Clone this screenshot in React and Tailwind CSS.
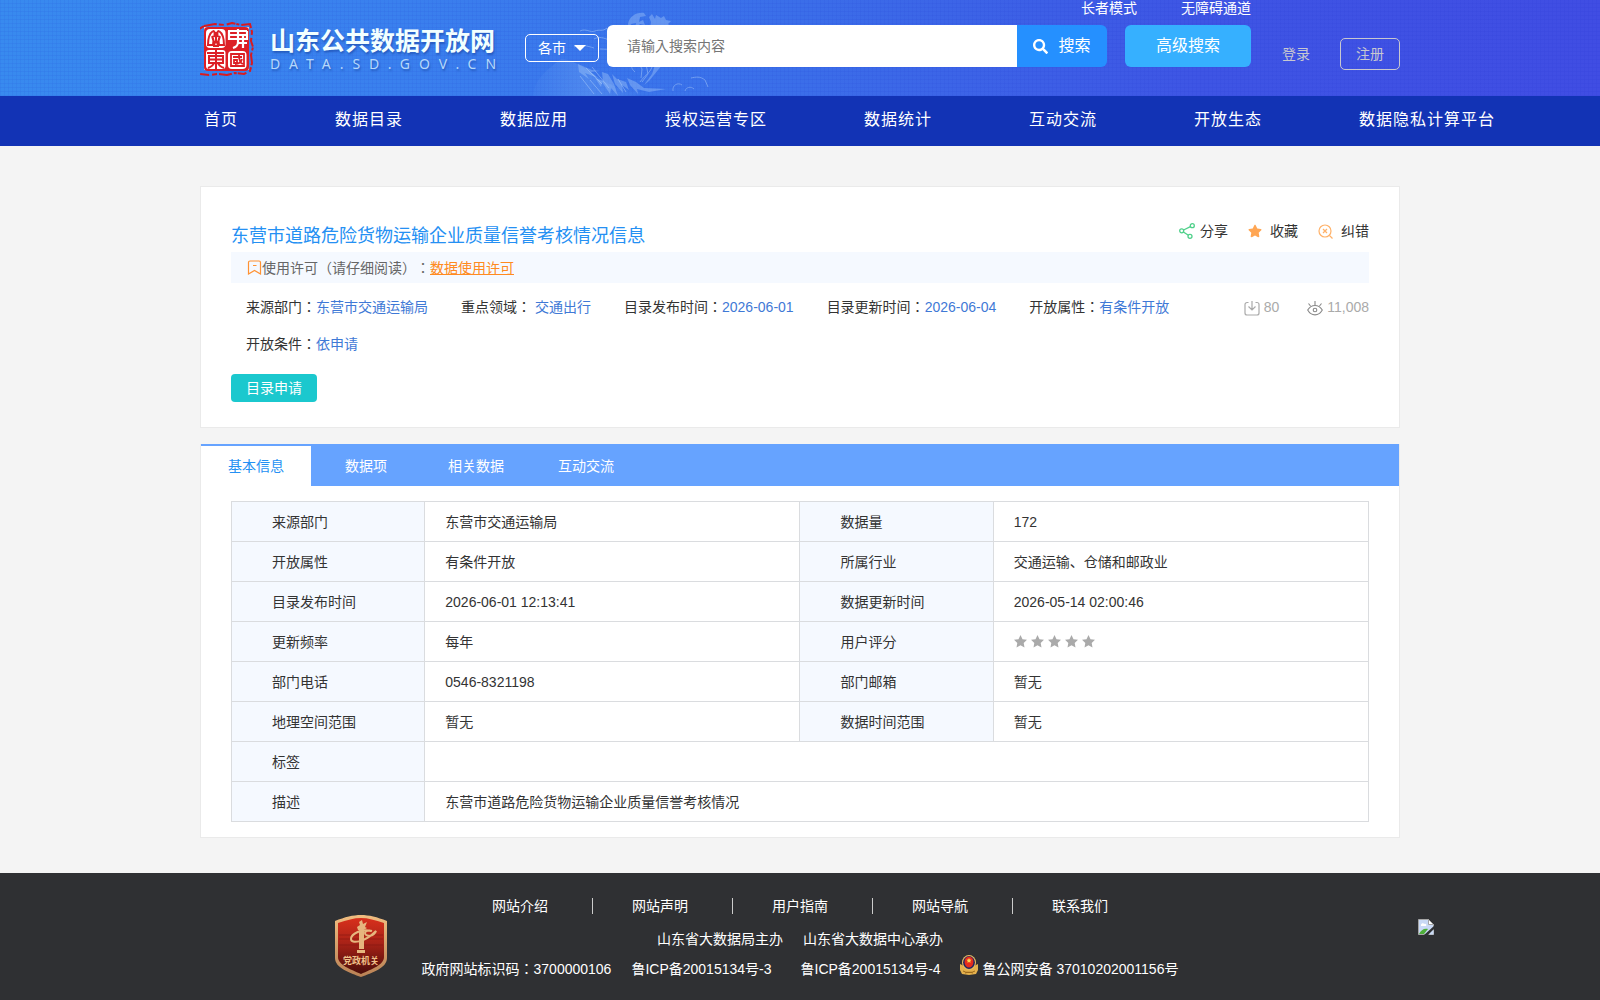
import { FaSearch, FaStar } from 'react-icons/fa';

const NAV_ITEMS = ['首页', '数据目录', '数据应用', '授权运营专区', '数据统计', '互动交流', '开放生态', '数据隐私计算平台'];

const TABS = ['基本信息', '数据项', '相关数据', '互动交流'];

const META = [
  { label: '来源部门：', value: '东营市交通运输局' },
  { label: '重点领域：', value: '交通出行', spaced: true },
  { label: '目录发布时间：', value: '2026-06-01' },
  { label: '目录更新时间：', value: '2026-06-04' },
  { label: '开放属性：', value: '有条件开放' },
  { label: '开放条件：', value: '依申请' },
];

const ROWS = [
  ['来源部门', '东营市交通运输局', '数据量', '172'],
  ['开放属性', '有条件开放', '所属行业', '交通运输、仓储和邮政业'],
  ['目录发布时间', '2026-06-01 12:13:41', '数据更新时间', '2026-05-14 02:00:46'],
  ['更新频率', '每年', '用户评分', <Rating key="rating" />],
  ['部门电话', '0546-8321198', '部门邮箱', '暂无'],
  ['地理空间范围', '暂无', '数据时间范围', '暂无'],
  ['标签', ''],
  ['描述', '东营市道路危险货物运输企业质量信誉考核情况'],
];

const FOOTER_LINKS = ['网站介绍', '网站声明', '用户指南', '网站导航', '联系我们'];

function Rating() {
  return (
    <span className="flex gap-1 text-[#aaaaaa]" role="img" aria-label="评分">
      {[1, 2, 3, 4, 5].map((n) => (
        <svg key={n} width="13" height="13" viewBox="0 0 13 13" fill="currentColor" aria-hidden="true">
          <path d="M6.500 0l2 4.200 4.500.6-3.300 3.100.8 4.600-4-2.200-4 2.200.8-4.600L0 4.800l4.500-.6z" />
        </svg>
      ))}
    </span>
  );
}

function Seal() {
  return (
    <svg width="54" height="54" viewBox="0 0 54 54" fill="none" aria-hidden="true">
      <path
        d="M4 4 15 2l10 1 7-2 9 2 9-1 2 8-1 9 2 6-2 8 1 8-2 8-6 3-9-1-8 2-9-1-9 1-9-1-6-3 2-9-1-7 2-8-2-9 1-7z"
        stroke="#d81a20"
        strokeWidth="2"
        strokeDasharray="13 2 5 3 9 1 3 2"
      />
      <path d="M4 5h45v43H4z" fill="#f6d5d9" />
      <rect x="4" y="5" width="45" height="44" rx="4" fill="#dc2026" />
      <rect x="6" y="7" width="19.500" height="19" rx="4" fill="#fff" />
      <rect x="6" y="28" width="19.500" height="19" rx="3" fill="#fff" />
      <rect x="28" y="29" width="18.500" height="18" rx="4" fill="#fff" />
      {/* left column carved in red */}
      <g stroke="#dc2026" strokeWidth="2">
        <path d="M13 9c-3 2-5 8-5 14h5c1-4 0-7-1-9M19 9c3 2 5 8 5 14h-5c-1-4 0-7 1-9M13 9c2 0 2 3 1 6M19 9c-2 0-2 3-1 6M16 10v7c0 3-2 4-2 7h4c0-3-2-4-2-7" />
        <path d="M7 31h17M16 28v19M9 34h14v7H9zM9 37.500h14M14 41c-1 3-3 4-6 5M18 41c1 3 3 4 6 5" />
      </g>
      {/* right column, white on red above and red on white below */}
      <g stroke="#fff" strokeWidth="2.200">
        <path d="M28 9h19M29 9v8h9M47 9v8h-9M38 7v13c0 4-2 5-5 6M43 13v13M29 13h18M38 21h9" />
      </g>
      <g stroke="#dc2026" strokeWidth="1.800">
        <path d="M31 32h13v12H31zM33 35h9M34 38h3v3h-3zM39 33c0 5 1 8 4 9M42 37c-1 4-3 5-7 5" />
      </g>
    </svg>
  );
}

function Mountain() {
  return (
    <svg
      className="absolute left-1/2 bottom-0 -ml-[270px] pointer-events-none"
      width="180"
      height="86"
      viewBox="0 0 180 86"
      fill="none"
      aria-hidden="true"
    >
      <defs>
        <linearGradient id="slope" x1="0" y1="0" x2="1" y2="0">
          <stop offset="0" stopColor="#7fb2f5" stopOpacity="0.050" />
          <stop offset=".5" stopColor="#7fb2f5" stopOpacity="0.300" />
          <stop offset="1" stopColor="#7fb2f5" stopOpacity="0" />
        </linearGradient>
      </defs>
      <path d="M3 86c2-18 14-26 28-37 8 0 14 4 22 8l20 14 20 9 22 2-8 4z" fill="url(#slope)" />
      <g fill="#a9cdfb" opacity=".38">
        <path d="M98 14c1-7 8-12 16-11l2 3-6 1-1 5 4-2 2 5-5-1-5 5 1-6-5 1-2 6z" />
        <path d="M119 7l3-3 3 5 1-4 5 3 3-2 2 4 5 1-3 3 4 3-7 4 1-5-5 3-1 4-3-6-3 4v-6l-4 3 1-6z" />
        <path d="M72 62l6 2 6 10 4 12-7-8-1 6-8-12-1 5-6-9 8 3z" />
        <path d="M82 64l5 5 9 3 3 8-7-5 1 8-8-9z" />
        <path d="M48 54l14 6 8 1-9 1 7 6-13-5 4 6-10-7z" />
        <path d="M97 68l9 4 8 6 22 1-17 3-12-3 1 5-8-9z" />
        <path d="M125 55l8-1-5 6-9 11-5 4 8-11z" />
      </g>
      <g stroke="#b5d4fc" strokeWidth="1" opacity=".45">
        <path d="M50 21c6-3 10 2 15 0s7 1 12-3M64 29c5-3 10-1 15 1M44 37c8-3 13-1 20 1M70 39c5 0 8 1 12-1" />
        <path d="M108 52l4 7-1 9M116 54l2 10-6 8M122 57c-2 6-8 9-12 15M100 52c2 4 1 7 5 10" />
        <path d="M56 58l16 16M62 57l17 21M60 70l12 14M50 66l14 18M88 69l8 13" />
        <path d="M143 81c-1-6 5-9 9-6M155 81c1-4 6-5 9-2M161 68c5-1 9-2 14 2l3 7" />
      </g>
    </svg>
  );
}

function Header() {
  return (
    <header className="relative h-24 overflow-hidden bg-[repeating-linear-gradient(0deg,rgba(20,40,200,0.07)_0_1px,transparent_1px_4px),repeating-linear-gradient(90deg,rgba(20,40,200,0.06)_0_1px,transparent_1px_4px),linear-gradient(90deg,#388aef_0%,#3a80ee_25%,#3b6ee9_50%,#3e55e4_75%,#404de3_100%)]">
      <Mountain />
      <div className="relative flex items-start max-w-[1200px] mx-auto">
        <a href="#" className="flex w-[325px] pt-[22px] text-[#f2ffff]">
          <Seal />
          <span className="pl-4 [text-shadow:1px_2px_2px_rgba(20,60,150,0.5)]">
            <span className="block text-[25px] leading-[34px] font-bold font-['Noto_Sans_CJK_SC',sans-serif]">
              山东公共数据开放网
            </span>
            <span className="block text-sm leading-4 tracking-[9px] whitespace-nowrap text-[#b5d8fb] font-['Noto_Sans',sans-serif]">
              DATA.SD.GOV.CN
            </span>
          </span>
        </a>
        <button
          type="button"
          className="flex items-center justify-center gap-2 w-[74px] h-7 mt-[34px] mr-2 shrink-0 border border-white rounded-[5px] text-sm text-white"
        >
          各市
          <svg width="12" height="6" viewBox="0 0 12 6" fill="#fff" aria-hidden="true">
            <path d="M0 0h12L6 6z" />
          </svg>
        </button>
        <div className="flex-1">
          <div className="flex justify-end gap-11 h-[25px] text-sm leading-4 text-white">
            <a href="#">长者模式</a>
            <a href="#">无障碍通道</a>
          </div>
          <div className="flex gap-[18px] h-[42px]">
            <form className="flex flex-1" onSubmit={(e) => e.preventDefault()}>
              <input
                type="text"
                aria-label="搜索内容"
                placeholder="请输入搜索内容"
                className="flex-1 min-w-0 px-5 bg-white rounded-l-md text-sm placeholder:text-[#757575] outline-none"
              />
              <button
                type="submit"
                className="flex items-center justify-center gap-[10px] w-[90px] bg-[#2590ff] rounded-r-md text-base text-white"
              >
                <FaSearch className="w-[15px] h-[15px]" />
                搜索
              </button>
            </form>
            <button type="button" className="w-[126px] bg-[#36b0ff] rounded-md text-base text-white">
              高级搜索
            </button>
          </div>
        </div>
        <div className="flex items-center gap-[30px] ml-[31px] mt-[38px] text-sm text-[#c8c8d0]">
          <a href="#">登录</a>
          <a href="#" className="flex items-center justify-center w-[60px] h-8 border border-[#c8c8d0] rounded-[5px]">
            注册
          </a>
        </div>
      </div>
    </header>
  );
}

function Nav() {
  return (
    <nav className="h-[50px] bg-[#1233b5]">
      <ul className="flex gap-[97px] max-w-[1200px] mx-auto pl-1 text-base leading-[48px] tracking-[1px] whitespace-nowrap text-white">
        {NAV_ITEMS.map((item) => (
          <li key={item}>
            <a href="#">{item}</a>
          </li>
        ))}
      </ul>
    </nav>
  );
}

function ShareIcon() {
  return (
    <svg width="16" height="16" viewBox="0 0 16 16" fill="none" stroke="#4fd08a" strokeWidth="1.300" aria-hidden="true">
      <circle cx="2.700" cy="7.800" r="2" />
      <circle cx="13.300" cy="2.700" r="2" />
      <circle cx="11" cy="13.300" r="2" />
      <path d="M4.600 7 11.400 3.600M4.400 9l5 3.200" />
    </svg>
  );
}

function ReportIcon() {
  return (
    <svg width="15" height="15" viewBox="0 0 15 15" fill="none" stroke="#ffb168" strokeWidth="1.200" aria-hidden="true">
      <circle cx="7" cy="7" r="6" />
      <path d="m5 5 4 4M9 5 5 9M11.500 11.500l3 3" />
    </svg>
  );
}

function DownloadIcon() {
  return (
    <svg width="16" height="16" viewBox="0 0 16 16" fill="none" stroke="#aaa" strokeWidth="1.200" aria-hidden="true">
      <path d="M4.500 2.500H3a2 2 0 0 0-2 2V13a2 2 0 0 0 2 2h10a2 2 0 0 0 2-2V4.500a2 2 0 0 0-2-2h-1.500M8 1v9M4.500 6.500 8 10l3.500-3.500" />
    </svg>
  );
}

function EyeIcon() {
  return (
    <svg width="16" height="16" viewBox="0 0 16 16" fill="none" stroke="#888" strokeWidth="1.100" aria-hidden="true">
      <path d="M.7 10c3.600-6 11-6 14.600 0-3.600 6.500-11 6.500-14.600 0zM8 1v4M1.500 3.500 3.500 6M14.500 3.500 12.500 6" />
      <circle cx="8" cy="10" r="1.800" />
    </svg>
  );
}

function Summary() {
  return (
    <section className="px-[30px] pt-7 pb-[25px] bg-white border border-[#eaeaea]">
      <div className="flex justify-between">
        <h1 className="pt-[3px] text-lg leading-9 text-[#2590f3]">东营市道路危险货物运输企业质量信誉考核情况信息</h1>
        <div className="flex gap-5 h-8 text-sm text-[#333]">
          <button type="button" className="flex items-center gap-[5px]">
            <ShareIcon />
            分享
          </button>
          <button type="button" className="flex items-center gap-2">
            <FaStar className="w-[14px] h-[14px] text-[#ffa654]" />
            收藏
          </button>
          <button type="button" className="flex items-center gap-2">
            <ReportIcon />
            纠错
          </button>
        </div>
      </div>
      <p className="flex items-center h-[31px] -mt-[2px] pl-4 bg-[#f5f9ff] text-sm text-[#666]">
        <svg width="15" height="15" viewBox="0 0 15 15" fill="none" stroke="#ff9233" strokeWidth="1.200" aria-hidden="true">
          <path d="M1.500 14V2.500a1.500 1.500 0 0 1 1.500-1.500h9a1.500 1.500 0 0 1 1.500 1.500V14l-6-3.500zM6 5.500h3.500" />
        </svg>
        使用许可（请仔细阅读）：
        <a href="#" className="text-[#ff8a20] underline">
          数据使用许可
        </a>
      </p>
      <div className="flex justify-between items-start pt-[6px] pl-[15px] text-sm">
        <dl className="flex flex-wrap flex-1 gap-x-[33px] leading-[37px]">
          {META.map(({ label, value, spaced }) => (
            <div key={label} className={spaced ? 'flex gap-1' : 'flex'}>
              <dt className="text-[#333]">{label}</dt>
              <dd className="text-[#3f79d6]">{value}</dd>
            </div>
          ))}
        </dl>
        <div className="flex gap-7 leading-[37px] text-[#aaa]">
          <span className="flex items-center gap-1">
            <DownloadIcon />
            80
          </span>
          <span className="flex items-center gap-1">
            <EyeIcon />
            11,008
          </span>
        </div>
      </div>
      <button type="button" className="w-[86px] h-7 mt-[11px] bg-[#1bc8ce] rounded text-sm text-white">
        目录申请
      </button>
    </section>
  );
}

function Details() {
  return (
    <section className="mt-4 bg-white border border-t-0 border-[#eaeaea]">
      <div role="tablist" className="flex h-[42px] pt-[2px] bg-[#66a3ff] text-sm">
        {TABS.map((tab, i) => (
          <button
            key={tab}
            type="button"
            role="tab"
            aria-selected={i === 0}
            className={i === 0 ? 'w-[110px] bg-white text-[#2590f3]' : 'w-[110px] text-white'}
          >
            {tab}
          </button>
        ))}
      </div>
      <div className="px-[30px] py-[15px]">
        <table className="w-full table-fixed border-collapse text-sm text-[#333]">
          <colgroup>
            <col className="w-[17%]" />
            <col className="w-[33%]" />
            <col className="w-[17%]" />
            <col className="w-[33%]" />
          </colgroup>
          <tbody>
            {ROWS.map((row) => (
              <tr key={row[0]} className="h-10">
                {row.map((cell, i) =>
                  i % 2 === 0 ? (
                    <th key={i} scope="row" className="pl-10 border border-[#dadcdf] bg-[#f5f9ff] text-left font-normal">
                      {cell}
                    </th>
                  ) : (
                    <td key={i} colSpan={row.length === 2 ? 3 : 1} className="pl-5 border border-[#dadcdf]">
                      {cell}
                    </td>
                  )
                )}
              </tr>
            ))}
          </tbody>
        </table>
      </div>
    </section>
  );
}

function PartyBadge() {
  return (
    <svg width="52" height="62" viewBox="0 0 52 62" role="img" aria-label="党政机关">
      <defs>
        <linearGradient id="shield" x1="0" y1="0" x2="0" y2="1">
          <stop offset="0" stopColor="#d8301c" />
          <stop offset=".45" stopColor="#a82217" />
          <stop offset="1" stopColor="#4a0d0a" />
        </linearGradient>
        <linearGradient id="rim" x1="0" y1="0" x2="0" y2="1">
          <stop offset="0" stopColor="#f0bd80" />
          <stop offset="1" stopColor="#b98155" />
        </linearGradient>
      </defs>
      <path d="M0 6C10 2 18 0 26 0s16 2 26 6v37c0 10-15 15-26 19C15 58 0 53 0 43z" fill="url(#rim)" />
      <path d="M3 8c9-3 16-5 23-5s14 2 23 5v34c0 8-12 12-23 17C15 54 3 50 3 42z" fill="url(#shield)" />
      <path d="M4 20h44M4 24h44M4 30h44" stroke="#7d1712" strokeWidth="1" opacity=".5" />
      <path d="M24 12h5v22h-5zM22 35h8v3h-8zM22 12l3-2-1-3 3-2 1 4 4-2-2 5 2 1-5 3-4-1z" fill="#e6b67e" />
      <path
        d="M36 16c-9-3-20 3-20 8s13 4 25-8c-2 6-11 6-11 2 0-2 4-3 7-2"
        fill="none"
        stroke="#e6b67e"
        strokeWidth="2"
      />
      <text x="26" y="49" textAnchor="middle" fontSize="9" fontWeight="700" fill="#efc18a">
        党政机关
      </text>
    </svg>
  );
}

function PoliceBadge() {
  return (
    <svg width="18" height="20" viewBox="0 0 18 20" aria-hidden="true">
      <path d="M0 9l4 2 5 4 5-4 4-2v6l-2 4-7 1-7-1-2-4z" fill="#e4b04c" />
      <ellipse cx="9" cy="7.500" rx="7" ry="7.500" fill="#e9bd62" />
      <ellipse cx="9" cy="7.500" rx="5.900" ry="6.500" fill="#1d2461" />
      <ellipse cx="9" cy="7" rx="4.500" ry="5.500" fill="#e52b1c" />
      <path d="m9 3 .8 1.600 1.700.2-1.200 1.200.3 1.700L9 6.900l-1.600.8.3-1.700-1.200-1.200 1.700-.2z" fill="#ffd34d" />
      <path d="M3 16c3 2 9 2 12 0M5 18c3-1 5-1 8 0" fill="none" stroke="#9c6a1c" strokeWidth="1" />
    </svg>
  );
}

function BrokenImage() {
  return (
    <svg width="16" height="16" viewBox="0 0 16 16" role="img" aria-label="图片">
      <path d="M.5.500h10l5 5v10H.5z" fill="#c9d9f5" stroke="#a5a5a5" />
      <path d="M10.500.500v5h5z" fill="#fff" stroke="#a5a5a5" />
      <path d="M3 6c0-2 3-2 3-1 2-1 3 1 2 2H3z" fill="#fff" />
      <path d="M1 15c2-4 5-6 9-5l-4 5z" fill="#4fae3a" />
      <path d="M16 7v3L10 16H6z" fill="#2f3033" />
      <path d="M15.500 11v4.500H11z" fill="#c9d9f5" />
    </svg>
  );
}

function Footer() {
  return (
    <footer className="grid grid-cols-[1fr_auto_1fr] flex-1 mt-[35px] pt-4 pb-4 bg-[#2f3033] text-sm text-white">
      <div className="flex justify-end pt-[26px] pr-[35px]">
        <PartyBadge />
      </div>
      <div className="text-center">
        <ul className="flex justify-center items-center h-[34px]">
          {FOOTER_LINKS.map((item, i) => (
            <li
              key={item}
              className={i === 0 ? 'pr-[44px] leading-4' : i === FOOTER_LINKS.length - 1 ? 'pl-[39px] leading-4 border-l border-[#ccc]' : 'pl-[39px] pr-[44px] leading-4 border-l border-[#ccc]'}
            >
              <a href="#">{item}</a>
            </li>
          ))}
        </ul>
        <p className="flex justify-center gap-5 leading-8">
          <span>山东省大数据局主办</span>
          <span>山东省大数据中心承办</span>
        </p>
        <p className="flex justify-center items-center leading-7">
          <span className="mr-5">政府网站标识码：3700000106</span>
          <a href="#" className="mr-[29px]">鲁ICP备20015134号-3</a>
          <a href="#" className="mr-[19px]">鲁ICP备20015134号-4</a>
          <a href="#" className="flex gap-[5px]">
            <PoliceBadge />
            鲁公网安备 37010202001156号
          </a>
        </p>
      </div>
      <div className="pt-[30px] pl-60">
        <BrokenImage />
      </div>
    </footer>
  );
}

export default function App() {
  return (
    <div className="flex flex-col min-h-screen bg-[#f4f4f4] overflow-x-hidden [text-spacing-trim:space-all] font-['Liberation_Sans','Noto_Sans_CJK_JP',sans-serif]">
      <Header />
      <Nav />
      <main className="w-full max-w-[1200px] mx-auto pt-10">
        <Summary />
        <Details />
      </main>
      <Footer />
    </div>
  );
}
